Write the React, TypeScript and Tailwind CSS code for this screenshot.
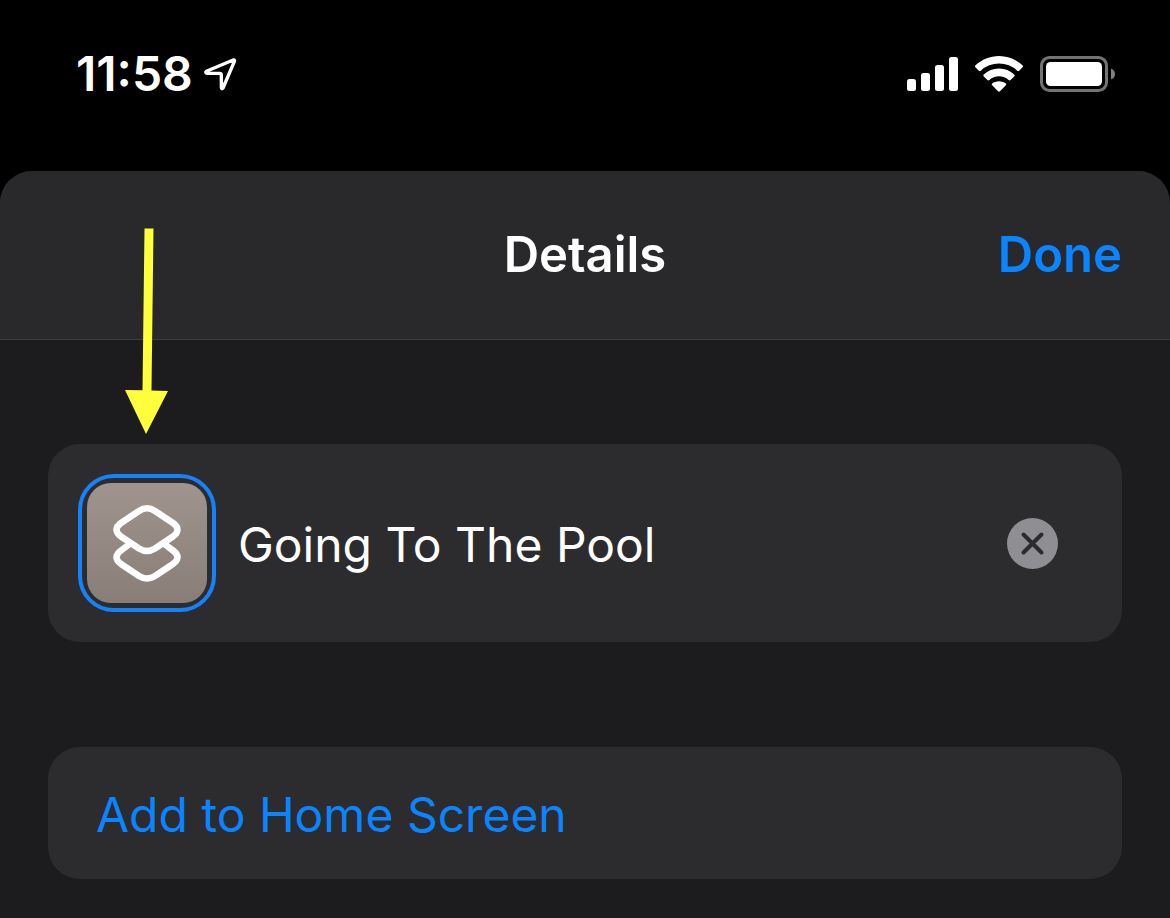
import { useState } from 'react'

function LocationIcon() {
  return (
    <svg viewBox="0 0 34 34" className="h-[34px] w-[34px]" fill="none" aria-hidden="true">
      <path
        d="M3.4 14.2 30.2 3Q32 2.6 31.4 4.4L20 31Q18.6 32.6 18.4 30.4L18.3 17.6Q18.2 16.4 17 16.4L4.2 16.4Q1.8 15.6 3.4 14.2Z"
        stroke="white"
        strokeWidth="3.4"
        strokeLinejoin="round"
      />
    </svg>
  )
}

function SignalIcon() {
  return (
    <svg viewBox="0 0 51 34" className="h-[34px] w-[51px]" fill="white" aria-hidden="true">
      <rect x="0" y="22" width="9" height="12" rx="2.5" />
      <rect x="14" y="16" width="9" height="18" rx="2.5" />
      <rect x="28" y="8" width="9" height="26" rx="2.5" />
      <rect x="42" y="0" width="9" height="34" rx="2.5" />
    </svg>
  )
}

function WifiIcon() {
  return (
    <svg viewBox="0 0 48 36" className="h-9 w-12" fill="white" aria-hidden="true">
      <path d="M24 0C33 0 41.2 3.5 47.5 9.3Q48.5 10.3 47.6 11.3L44.2 14.7Q43.2 15.6 42.2 14.7A26.5 26.5 0 0 0 5.8 14.7Q4.8 15.6 3.8 14.7L.4 11.3Q-.5 10.3 .5 9.3C6.8 3.5 15 0 24 0Z" />
      <path d="M24 12.5C29.9 12.5 35.2 14.7 39.2 18.4Q40.2 19.4 39.2 20.4L35.6 24Q34.6 24.9 33.6 24A14.5 14.5 0 0 0 14.4 24Q13.4 24.9 12.4 24L8.8 20.4Q7.8 19.4 8.8 18.4C12.8 14.7 18.1 12.5 24 12.5Z" />
      <path d="M24 25.3C26.6 25.3 29 26.2 30.8 27.6Q31.7 28.4 30.8 29.3L25 35.3Q24 36.2 23 35.3L17.2 29.3Q16.3 28.4 17.2 27.6C19 26.2 21.4 25.3 24 25.3Z" />
    </svg>
  )
}

function BatteryIcon() {
  return (
    <svg viewBox="0 0 75 36" className="h-9 w-[75px]" fill="none" aria-hidden="true">
      <rect x="1.5" y="1.5" width="65" height="33" rx="8" stroke="#737373" strokeWidth="3" />
      <rect x="6" y="6" width="56" height="24" rx="4.5" fill="white" />
      <path d="M71 12.5Q75 14 75 18T71 23.5Z" fill="#808080" />
    </svg>
  )
}

function ShortcutGlyph() {
  return (
    <svg viewBox="0 0 120 120" className="h-full w-full" fill="none" aria-hidden="true">
      <g stroke="white" strokeWidth="6.5" strokeLinecap="round" strokeLinejoin="round">
        <path d="M52 28Q60 22.5 68 28L86 40Q95 46.5 86 53.5L68 65.5Q60 70.5 52 65.5L34 53.5Q25 46.5 34 40Z" />
        <path d="M42 61.5 34 67.5Q25 74 34 81L52 93Q60 98 68 93L86 81Q95 74 86 67.5L78 61.5" />
      </g>
    </svg>
  )
}

function PointerArrow() {
  return (
    <svg
      viewBox="0 0 44 206"
      className="pointer-events-none absolute bottom-full left-[77px] mb-2.5 h-[206px] w-11"
      fill="#ffff3b"
      aria-hidden="true"
    >
      <path d="M19.5 .5H28.5L26.5 162.5 43 163 21 206 0 162 17.5 162.3Z" />
    </svg>
  )
}

function StatusBar() {
  return (
    <div className="flex h-[171px] items-start justify-between pt-12 pr-[55px] pl-[76px]">
      <div className="flex h-[52px] items-center gap-2.5">
        <span className="text-[48px] font-semibold">11:58</span>
        <LocationIcon />
      </div>
      <div className="flex h-[52px] items-center gap-[17px]">
        <SignalIcon />
        <WifiIcon />
        <BatteryIcon />
      </div>
    </div>
  )
}

export default function App() {
  const [name, setName] = useState('Going To The Pool')

  return (
    <div className="flex min-h-screen flex-col bg-black font-[Inter,sans-serif] text-white">
      <StatusBar />

      <main className="flex-1 overflow-hidden rounded-t-[32px] bg-[#1c1c1e]">
        <header className="grid h-[169px] grid-cols-3 items-center border-b border-[#3d3d40] bg-[#29292b] px-12 text-[49px] font-semibold">
          <h1 className="col-start-2 text-center">Details</h1>
          <button type="button" className="justify-self-end text-[#0a84ff]">
            Done
          </button>
        </header>

        <div className="flex flex-col gap-[105px] px-12 pt-[104px] pb-10">
          <section className="relative flex items-center rounded-[32px] bg-[#2c2c2e] py-[30px] pr-16 pl-[30px]">
            <PointerArrow />
            <button
              type="button"
              aria-label="Choose icon"
              className="h-[138px] w-[138px] shrink-0 rounded-[36px] border-4 border-[#1582fb] p-[5px]"
            >
              <span className="block h-full w-full rounded-3xl bg-linear-to-b from-[#a0948e] to-[#897e77]">
                <ShortcutGlyph />
              </span>
            </button>
            <input
              type="text"
              aria-label="Shortcut name"
              value={name}
              onChange={(event) => setName(event.target.value)}
              className="ml-[22px] min-w-0 flex-1 bg-transparent pt-1 text-[48px] outline-none"
            />
            <button
              type="button"
              aria-label="Clear name"
              onClick={() => setName('')}
              className="h-[51px] w-[51px] shrink-0 rounded-full bg-[#8e8e93]"
            >
              <svg viewBox="0 0 51 51" className="h-full w-full" fill="none" aria-hidden="true">
                <path
                  d="M16.5 16.5 34.5 34.5M34.5 16.5 16.5 34.5"
                  stroke="#2c2c2e"
                  strokeWidth="4"
                  strokeLinecap="round"
                />
              </svg>
            </button>
          </section>

          <button
            type="button"
            className="h-[132px] rounded-[32px] bg-[#2c2c2e] px-12 pt-1 text-left text-[48px] text-[#0a84ff]"
          >
            Add to Home Screen
          </button>
        </div>
      </main>
    </div>
  )
}
